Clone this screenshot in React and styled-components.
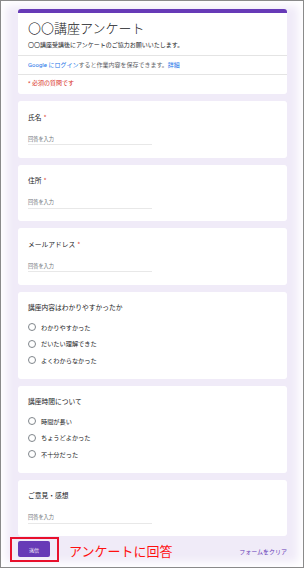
import React from "react";
import styled, { createGlobalStyle } from "styled-components";

const Global = createGlobalStyle`
  html, body { margin: 0; padding: 0; background: #fff; }
  body { font-family: Roboto, "Noto Sans CJK JP", sans-serif; }
  * { box-sizing: border-box; }
`;

const Frame = styled.div`
  width: 304px;
  height: 568px;
  border: 1px solid #8a8a8a;
  background: #f0ebf8;
  box-shadow: inset 0 0 8px 5px #fff;
  overflow: hidden;
  padding: 8px 0 0 17px;
`;

const Column = styled.div`
  width: 269px;
  display: flex;
  flex-direction: column;
  gap: 7px;
`;

const Card = styled.div`
  background: #fff;
  border-radius: 3px;
  overflow: hidden;
`;

const HeaderCard = styled(Card)`
  border-top: 4px solid #673ab7;
`;

const HeadSection = styled.div`
  padding: ${(p) => p.$pad};
  border-bottom: ${(p) => (p.$divider ? "1px solid #e4e4e4" : "none")};
`;

const Title = styled.div`
  font-family: "Noto Sans CJK JP", sans-serif;
  font-weight: 300;
  font-size: 13px;
  line-height: 16px;
  color: #202124;
`;

const Desc = styled.div`
  font-family: "Noto Sans CJK JP", sans-serif;
  font-size: 6px;
  line-height: 8px;
  margin-top: 5px;
  color: #202124;
`;

const Note = styled.div`
  font-family: Roboto, "Noto Sans CJK JP", sans-serif;
  font-size: 6px;
  line-height: 8px;
  color: ${(p) => p.$color || "#5f6368"};
`;

const Link = styled.span`
  color: #1a73e8;
`;

const QuestionCard = styled(Card)`
  padding: ${(p) => (p.$radio ? "10.5px 10px 10.25px" : "10.5px 10px 12.5px")};
`;

const Label = styled.div`
  font-family: "Noto Sans CJK JP", sans-serif;
  font-size: 6.75px;
  line-height: 10px;
  color: #202124;
`;

const Star = styled.span`
  color: #d93025;
  margin-left: 2px;
`;

const InputLine = styled.div`
  width: 124px;
  margin-top: 13px;
  padding-bottom: 1.5px;
  border-bottom: 1px solid #e8e8e8;
  font-family: "Noto Sans CJK JP", sans-serif;
  font-size: 5.2px;
  line-height: 8px;
  color: #70757a;
`;

const Options = styled.div`
  margin-top: 6.75px;
  display: flex;
  flex-direction: column;
`;

const Option = styled.div`
  height: 16.5px;
  display: flex;
  align-items: center;
  gap: 5px;
  font-family: "Noto Sans CJK JP", sans-serif;
  font-size: 6.2px;
  color: #202124;
`;

const Radio = styled.span`
  width: 8px;
  height: 8px;
  border: 1px solid #80868b;
  border-radius: 50%;
  flex: none;
`;

const Footer = styled.div`
  display: flex;
  align-items: center;
  margin: 1px 0 0 -8px;
  width: 277px;
`;

const Highlight = styled.div`
  border: 2px solid #e8102c;
  padding: 2px 7px 3px 6px;
`;

const Submit = styled.div`
  width: 32px;
  height: 16px;
  background: #673ab7;
  border-radius: 2px;
  color: #fff;
  font-family: "Noto Sans CJK JP", sans-serif;
  font-size: 5px;
  display: flex;
  align-items: center;
  justify-content: center;
`;

const Annotation = styled.div`
  margin-left: 10px;
  margin-top: 3px;
  font-family: "Noto Sans CJK JP", sans-serif;
  font-size: 13px;
  line-height: 16px;
  color: #ff1010;
`;

const Clear = styled.div`
  margin-left: auto;
  margin-top: 3px;
  font-family: "Noto Sans CJK JP", sans-serif;
  font-size: 6px;
  color: #673ab7;
`;

const TextQuestion = ({ label, required }) => (
  <QuestionCard>
    <Label>
      {label}
      {required && <Star>*</Star>}
    </Label>
    <InputLine>回答を入力</InputLine>
  </QuestionCard>
);

const RadioQuestion = ({ label, options }) => (
  <QuestionCard $radio>
    <Label>{label}</Label>
    <Options>
      {options.map((o) => (
        <Option key={o}>
          <Radio />
          {o}
        </Option>
      ))}
    </Options>
  </QuestionCard>
);

export default function App() {
  return (
    <>
      <Global />
      <Frame>
        <Column>
          <HeaderCard>
            <HeadSection $pad="7px 10px 6px" $divider>
              <Title>〇〇講座アンケート</Title>
              <Desc>〇〇講座受講後にアンケートのご協力お願いいたします。</Desc>
            </HeadSection>
            <HeadSection $pad="5px 10px 5px" $divider>
              <Note>
                <Link>Google にログイン</Link>すると作業内容を保存できます。<Link>詳細</Link>
              </Note>
            </HeadSection>
            <HeadSection $pad="3.5px 10px 7.5px">
              <Note $color="#d93025">* 必須の質問です</Note>
            </HeadSection>
          </HeaderCard>
          <TextQuestion label="氏名" required />
          <TextQuestion label="住所" required />
          <TextQuestion label="メールアドレス" required />
          <RadioQuestion
            label="講座内容はわかりやすかったか"
            options={["わかりやすかった", "だいたい理解できた", "よくわからなかった"]}
          />
          <RadioQuestion
            label="講座時間について"
            options={["時間が長い", "ちょうどよかった", "不十分だった"]}
          />
          <TextQuestion label="ご意見・感想" />
        </Column>
        <Footer>
          <Highlight>
            <Submit>送信</Submit>
          </Highlight>
          <Annotation>アンケートに回答</Annotation>
          <Clear>フォームをクリア</Clear>
        </Footer>
      </Frame>
    </>
  );
}
